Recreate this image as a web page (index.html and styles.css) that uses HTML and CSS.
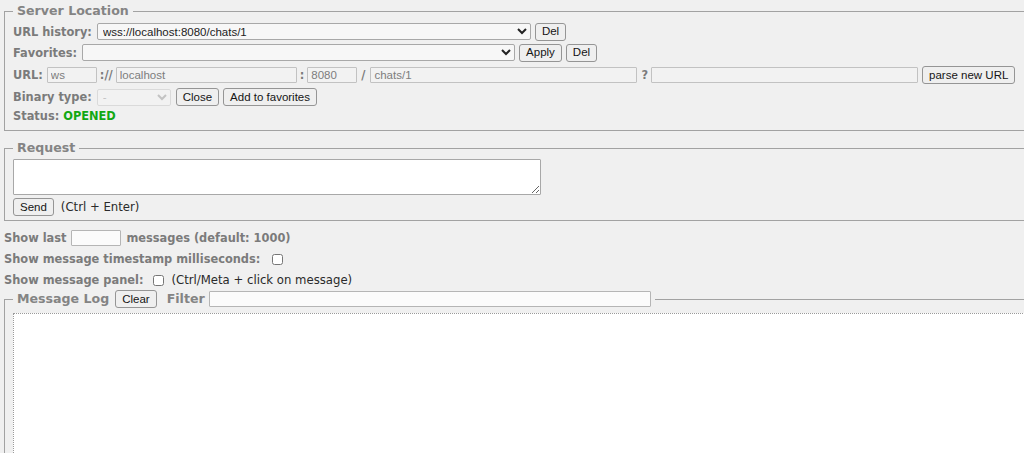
FILE: index.html
```html
<!DOCTYPE html>
<html>
<head>
<meta charset="utf-8">
<title>WebSocket Client</title>
<link rel="stylesheet" href="styles.css">
</head>
<body>
<div class="page">
  <fieldset class="box server">
    <legend>Server Location</legend>
    <div class="row r-hist">
      <span class="lbl">URL history:</span>
      <select class="sel sel-hist"><option>wss://localhost:8080/chats/1</option></select>
      <button class="btn">Del</button>
    </div>
    <div class="row r-fav">
      <span class="lbl">Favorites:</span>
      <select class="sel sel-fav"><option></option></select>
      <button class="btn">Apply</button>
      <button class="btn">Del</button>
    </div>
    <div class="row r-url">
      <span class="lbl">URL:</span>
      <input class="inp dis w-scheme" value="ws" disabled>
      <span class="lbl sep-scheme">://</span>
      <input class="inp dis w-host" value="localhost" disabled>
      <span class="lbl sep-port">:</span>
      <input class="inp dis w-port" value="8080" disabled>
      <span class="lbl sep-path">/</span>
      <input class="inp dis w-path" value="chats/1" disabled>
      <span class="lbl sep-query">?</span>
      <input class="inp dis w-query" value="" disabled>
      <button class="btn">parse new URL</button>
    </div>
    <div class="row r-bin">
      <span class="lbl">Binary type:</span>
      <select class="sel sel-bin" disabled><option>-</option></select>
      <button class="btn btn-close">Close</button>
      <button class="btn">Add to favorites</button>
    </div>
    <div class="row r-status">
      <span class="lbl">Status:</span>
      <span class="status-ok">OPENED</span>
    </div>
  </fieldset>

  <fieldset class="box request">
    <legend>Request</legend>
    <textarea class="req-text"></textarea>
    <div class="row r-send">
      <button class="btn">Send</button>
      <span class="hint">(Ctrl + Enter)</span>
    </div>
  </fieldset>

  <div class="opts">
    <div class="row r-opt">
      <span class="lbl">Show last</span>
      <input class="inp w-last" value="">
      <span class="lbl">messages (default: 1000)</span>
    </div>
    <div class="row r-opt">
      <span class="lbl">Show message timestamp milliseconds:</span>
      <input type="checkbox" class="chk chk-ms">
    </div>
    <div class="row r-opt">
      <span class="lbl">Show message panel:</span>
      <input type="checkbox" class="chk chk-panel">
      <span class="hint">(Ctrl/Meta + click on message)</span>
    </div>
  </div>

  <fieldset class="box log">
    <legend class="log-legend">
      <span class="legend-text">Message Log</span>
      <button class="btn btn-clear">Clear</button>
      <span class="legend-text filter-lbl">Filter</span>
      <input class="inp w-filter" value="">
    </legend>
    <div class="log-area"></div>
  </fieldset>
</div>
</body>
</html>
```
FILE: styles.css
```css
html, body {
  margin: 0;
  padding: 0;
  background: #f0f0f0;
  overflow: hidden;
  height: 100%;
}

.page {
  width: 1100px;
  padding: 3px 0 0 4px;
  font-family: "DejaVu Sans", sans-serif;
  font-size: 11.4px;
  color: #7b7b7b;
}

.box {
  margin: 0;
  padding: 0 8px;
  border: 1px solid #a2a2a2;
  min-width: 0;
}

.box legend {
  padding: 0 4px;
  font-family: "DejaVu Sans", sans-serif;
  font-weight: bold;
  font-size: 12.6px;
  line-height: 16px;
  color: #848484;
}

.row {
  display: flex;
  align-items: center;
  gap: 4px;
  white-space: nowrap;
}

.lbl {
  font-weight: bold;
  color: #7b7b7b;
}

.server {
  padding-bottom: 6px;
}

.r-hist { margin-top: 4px; height: 17px; gap: 5px; }
.r-hist .btn { margin-left: -1px; }
.r-fav { margin-top: 4px; height: 17px; gap: 4px; }
.r-fav .sel { margin-left: 1px; }
.r-url { margin-top: 5px; height: 18px; }
.r-bin { margin-top: 4px; height: 18px; gap: 5px; }
.r-bin .btn + .btn { margin-left: -1px; }
.r-status { margin-top: 2px; height: 16px; gap: 4px; }

.sep-scheme { margin: 0 -1px; }
.sep-port { margin: 0 -1px; }
.sep-path { margin-right: 1px; }
.sep-query { margin-right: -1px; }

.status-ok {
  font-weight: bold;
  color: #12a812;
}

.sel {
  height: 17px;
  box-sizing: border-box;
  padding: 0 1px;
  font-family: "Liberation Sans", Arial, sans-serif;
  font-size: 11.5px;
  color: #222;
  background-color: #f7f7f7;
  border: 1px solid #a8a8a8;
  border-radius: 2px;
}
.sel-hist { width: 434px; }
.sel-fav { width: 433px; }
.sel-bin {
  width: 74px;
  color: #b0b0b0;
  background-color: #f3f3f3;
  border-color: #d2d2d2;
}

.btn {
  height: 18px;
  box-sizing: border-box;
  padding: 0 6px;
  font-family: "Liberation Sans", Arial, sans-serif;
  font-size: 11.5px;
  color: #151515;
  background: #efefef;
  border: 1px solid #959595;
  border-radius: 3px;
  line-height: 15px;
}

.inp {
  height: 16px;
  box-sizing: border-box;
  padding: 0 3px;
  font-family: "Liberation Sans", Arial, sans-serif;
  font-size: 11.5px;
  color: #222;
  background: #fbfbfb;
  border: 1px solid #b5b5b5;
  border-radius: 1px;
  margin: 0;
}
.inp.dis {
  color: #7d7d7d;
  background: #f2f2f2;
  border-color: #c2c2c2;
}

.w-scheme { width: 50px; }
.w-host { width: 181px; }
.w-port { width: 50px; }
.w-path { width: 267px; }
.w-query { width: 267px; }
.w-last { width: 50px; margin: 0 1px; }
.w-filter { width: 442px; }

.request {
  margin-top: 9px;
  padding-bottom: 4px;
}

.req-text {
  display: block;
  margin: 3px 0 0 0;
  width: 528px;
  height: 36px;
  box-sizing: border-box;
  background: #fff;
  border: 1px solid #a8a8a8;
  border-radius: 1px;
  padding: 2px;
}

.r-send {
  margin-top: 3px;
  height: 18px;
  gap: 7px;
}

.hint {
  font-weight: normal;
  font-size: 11.7px;
  color: #2a2a2a;
}

.opts {
  margin-top: 9px;
  display: flex;
  flex-direction: column;
  gap: 5px;
}
.r-opt { height: 16px; }

.chk {
  width: 11px;
  height: 11px;
  margin: 0 0 0 8px;
}
.chk-panel { margin-left: 6px; margin-right: 3px; }

.log {
  margin-top: 2px;
}

.log-legend {
  display: flex;
  align-items: center;
  gap: 4px;
  line-height: 18px;
}
.log-legend .legend-text {
  font-weight: bold;
  color: #848484;
}
.btn-clear { margin-left: 2px; }
.filter-lbl { margin-left: 6px; }

.log-area {
  margin-top: 5px;
  height: 200px;
  background: #fff;
  border: 1px dotted #9a9a9a;
  border-right: none;
}
```
